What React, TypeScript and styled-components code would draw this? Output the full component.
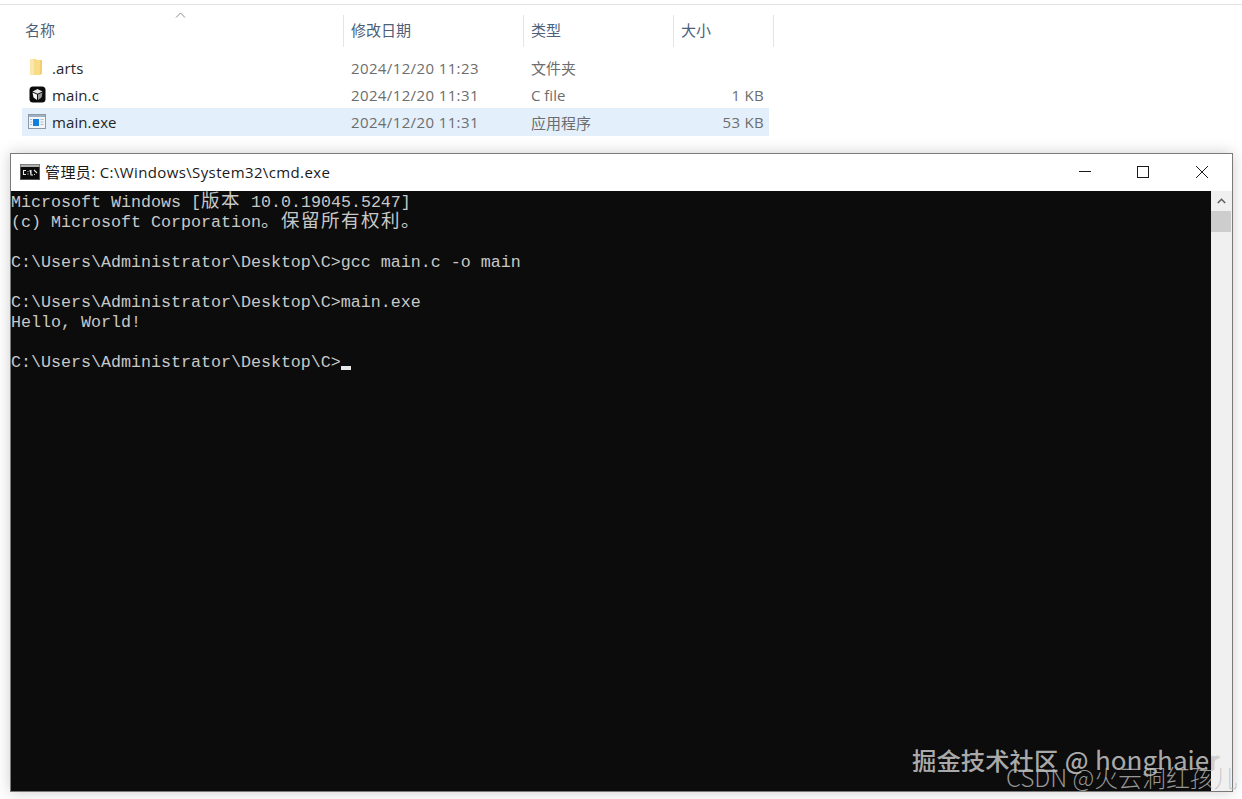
import React from "react";
import styled, { createGlobalStyle } from "styled-components";

const Global = createGlobalStyle`
  html, body { margin: 0; padding: 0; background: #fff; }
  #root { width: 1242px; height: 799px; overflow: hidden; }
`;

const Page = styled.div`
  position: relative;
  width: 1242px;
  height: 799px;
  display: flex;
  flex-direction: column;
  overflow: hidden;
  background: #fff;
  font-family: "Open Sans", "Noto Sans CJK SC", sans-serif;
`;

const Explorer = styled.section`
  height: 153px;
  flex: none;
  box-sizing: border-box;
  padding: 10px 0 0 22px;
  border-top: 1px solid #e3e3e3;
  margin-top: 4px;
  margin-bottom: -4px;
`;

const HeaderRow = styled.div`
  position: relative;
  display: grid;
  grid-template-columns: 322px 180px 150px 100px;
  height: 32px;
`;

const HeaderCell = styled.div<{ $first?: boolean }>`
  box-sizing: border-box;
  padding-left: ${(p) => (p.$first ? "3px" : "7px")};
  border-right: 1px solid #e5e5e5;
  font-size: 15px;
  line-height: 31px;
  color: #4c607a;
`;

const SortArrow = styled.svg`
  position: absolute;
  left: 153px;
  top: -3px;
`;

const Rows = styled.div`
  margin-top: 7px;
  width: 747px;
`;

const Row = styled.div<{ $selected?: boolean }>`
  display: grid;
  grid-template-columns: 321px 180px 150px 96px;
  height: ${(p) => (p.$selected ? "28px" : "27px")};
  align-items: center;
  background: ${(p) => (p.$selected ? "#e3f0fb" : "transparent")};
  font-size: 15px;
  color: #6d6d6d;
`;

const NameCell = styled.div`
  display: flex;
  align-items: center;
  gap: 5px;
  padding-left: 6px;
  color: #262626;
  letter-spacing: 0.1px;
`;

const IconSlot = styled.span`
  width: 19px;
  height: 19px;
  display: flex;
  align-items: center;
  justify-content: center;
`;

const DataCell = styled.div`
  padding-left: 8px;
  white-space: nowrap;
`;

const DateCell = styled(DataCell)`
  letter-spacing: 0.38px;
`;

const SizeCell = styled.div`
  text-align: right;
  padding-right: 5px;
  letter-spacing: 0.3px;
`;

const Window = styled.section`
  margin-left: 10px;
  width: 1223px;
  height: 639px;
  flex: none;
  box-sizing: border-box;
  display: flex;
  flex-direction: column;
  border: 1px solid #7a7a7a;
  background: #fff;
  box-shadow: 0 0 14px rgba(0, 0, 0, 0.2);
`;

const TitleBar = styled.header`
  height: 37px;
  box-sizing: border-box;
  padding: 0 0 1px 9px;
  flex: none;
  display: flex;
  align-items: center;
  background: #fff;
`;

const Title = styled.div`
  margin: 0 0 2px 5px;
  font-size: 15px;
  letter-spacing: 0.38px;
  color: #1a1a1a;
  white-space: nowrap;
  flex: 1;
`;

const Controls = styled.div`
  display: flex;
  align-items: center;
  box-sizing: border-box;
  padding-right: 1px;
  height: 100%;
`;

const ControlButton = styled.div`
  width: 58.5px;
  height: 100%;
  display: flex;
  align-items: center;
  justify-content: center;
`;

const Body = styled.div`
  flex: 1;
  display: flex;
  min-height: 0;
`;

const Console = styled.div`
  flex: 1;
  box-sizing: border-box;
  padding-top: 2px;
  background: #0c0c0c;
  color: #c8c8c8;
  font-family: "Liberation Mono", "Noto Sans CJK SC", monospace;
  font-size: 16.67px;
  line-height: 20px;
`;

const Line = styled.div`
  height: 20px;
  white-space: pre;
`;

const Wide = styled.span`
  font-family: "Noto Sans CJK SC", sans-serif;
  font-size: 18.5px;
  letter-spacing: 1.5px;
  line-height: 0;
`;

const Caret = styled.span`
  display: inline-block;
  width: 10px;
  height: 4px;
  background: #e8e8e8;
  vertical-align: -3px;
`;

const Scrollbar = styled.aside`
  width: 21px;
  flex: none;
  background: #f0f0f0;
  display: flex;
  flex-direction: column;
  align-items: stretch;
`;

const ScrollButton = styled.div`
  height: 20px;
  display: flex;
  align-items: center;
  justify-content: center;
`;

const Thumb = styled.div`
  height: 21px;
  margin-right: 1px;
  background: #cdcdcd;
`;

const MarkJuejin = styled.div`
  position: absolute;
  left: 912px;
  top: 743px;
  font-size: 24.4px;
  font-weight: 500;
  word-spacing: 1px;
  line-height: 32px;
  color: rgba(255, 255, 255, 0.68);
  text-shadow: 0 0 1px rgba(0, 0, 0, 0.55);
  font-family: "Noto Sans CJK SC", sans-serif;
  white-space: nowrap;
`;

const MarkLatin = styled.span`
  font-size: 26px;
  font-weight: 400;
`;

const MarkCsdn = styled.div`
  position: absolute;
  left: 1006px;
  top: 762px;
  font-size: 23.9px;
  line-height: 30px;
  font-weight: 300;
  color: rgba(190, 190, 190, 0.78);
  font-family: "Noto Sans CJK SC", sans-serif;
  white-space: nowrap;
`;

const FolderIcon = () => (
  <svg width="19" height="19" viewBox="0 0 19 19">
    <path d="M2 1h6l1 1h4v15H2z" fill="#f8dc8a" />
    <path d="M2 1h3l1 1v15H2z" fill="#fbe7ab" />
    <path d="M12 2h2v14h-2z" fill="#f3cf6e" />
  </svg>
);

const CubeIcon = () => (
  <svg width="17" height="17" viewBox="0 0 17 17">
    <rect x="0.5" y="0.5" width="16" height="16" rx="3.5" fill="#0b0b0b" />
    <path d="M3.5 5.5 8.5 3l5 2.5-5 2.2z" fill="#e8e8e8" />
    <path d="M3.5 6.5 8 8.5V14L4.5 11.5z" fill="#f5f5f5" />
    <path d="M13.5 6.5 9 8.5V14l3.5-2.5z" fill="#9a9a9a" />
  </svg>
);

const ExeIcon = () => (
  <svg width="19" height="16" viewBox="0 0 19 16">
    <rect x="0.5" y="0.5" width="17" height="14" fill="#f2f6fa" stroke="#8c99a8" />
    <rect x="1" y="1" width="16" height="2" fill="#9fb0c2" />
    <rect x="5" y="5" width="6" height="7" fill="#0f7fe0" />
    <path d="M12.5 5.5h3M12.5 8h3M12.5 10.5h3M2 5.5h2M2 8h2M2 10.5h2" stroke="#a9bfd2" />
  </svg>
);

const CmdIcon = () => (
  <svg width="20" height="16" viewBox="0 0 20 16">
    <rect x="0" y="0" width="20" height="16" fill="#555" />
    <rect x="0.5" y="0.5" width="19" height="2.5" fill="#b0b0b0" />
    <rect x="1" y="3" width="18" height="12" fill="#0a0a0a" />
    <path d="M6 6.5H3.5v4H6M8 7v.8M8 9.6v.8M10 6l1 5 M11 6v5h2 M14 6l3 3M14 10.5h1" stroke="#e6e6e6" strokeWidth="1.1" fill="none" />
  </svg>
);

const lineStroke = "#1a1a1a";

export default function App() {
  return (
    <Page>
      <Global />
      <Explorer>
        <HeaderRow>
          <HeaderCell $first>名称</HeaderCell>
          <HeaderCell>修改日期</HeaderCell>
          <HeaderCell>类型</HeaderCell>
          <HeaderCell>大小</HeaderCell>
          <SortArrow width="11" height="7" viewBox="0 0 11 7">
            <path d="M1 5.5 5.5 1 10 5.5" fill="none" stroke="#8a8a8a" />
          </SortArrow>
        </HeaderRow>
        <Rows>
          <Row>
            <NameCell>
              <IconSlot><FolderIcon /></IconSlot>.arts
            </NameCell>
            <DateCell>2024/12/20 11:23</DateCell>
            <DataCell>文件夹</DataCell>
            <SizeCell />
          </Row>
          <Row>
            <NameCell>
              <IconSlot><CubeIcon /></IconSlot>main.c
            </NameCell>
            <DateCell>2024/12/20 11:31</DateCell>
            <DataCell>C file</DataCell>
            <SizeCell>1 KB</SizeCell>
          </Row>
          <Row $selected>
            <NameCell>
              <IconSlot><ExeIcon /></IconSlot>main.exe
            </NameCell>
            <DateCell>2024/12/20 11:31</DateCell>
            <DataCell>应用程序</DataCell>
            <SizeCell>53 KB</SizeCell>
          </Row>
        </Rows>
      </Explorer>

      <Window>
        <TitleBar>
          <CmdIcon />
          <Title>管理员: C:\Windows\System32\cmd.exe</Title>
          <Controls>
            <ControlButton>
              <svg width="12" height="12" viewBox="0 0 12 12">
                <path d="M0 5.5h12" stroke={lineStroke} />
              </svg>
            </ControlButton>
            <ControlButton>
              <svg width="12" height="12" viewBox="0 0 12 12">
                <rect x="0.5" y="0.5" width="11" height="11" fill="none" stroke={lineStroke} />
              </svg>
            </ControlButton>
            <ControlButton>
              <svg width="12" height="12" viewBox="0 0 12 12">
                <path d="M0 0l12 12M12 0 0 12" stroke={lineStroke} />
              </svg>
            </ControlButton>
          </Controls>
        </TitleBar>
        <Body>
          <Console>
            <Line>Microsoft Windows [<Wide>版本</Wide> 10.0.19045.5247]</Line>
            <Line>(c) Microsoft Corporation<Wide>。保留所有权利。</Wide></Line>
            <Line> </Line>
            <Line>C:\Users\Administrator\Desktop\C&gt;gcc main.c -o main</Line>
            <Line> </Line>
            <Line>C:\Users\Administrator\Desktop\C&gt;main.exe</Line>
            <Line>Hello, World!</Line>
            <Line> </Line>
            <Line>C:\Users\Administrator\Desktop\C&gt;<Caret /></Line>
          </Console>
          <Scrollbar>
            <ScrollButton>
              <svg width="9" height="6" viewBox="0 0 9 6">
                <path d="M0.8 5 4.5 1.3 8.2 5" fill="none" stroke="#606060" strokeWidth="1.6" />
              </svg>
            </ScrollButton>
            <Thumb />
          </Scrollbar>
        </Body>
      </Window>

      <MarkJuejin>掘金技术社区 @ <MarkLatin>honghaier</MarkLatin></MarkJuejin>
      <MarkCsdn>CSDN @火云洞红孩儿</MarkCsdn>
    </Page>
  );
}
